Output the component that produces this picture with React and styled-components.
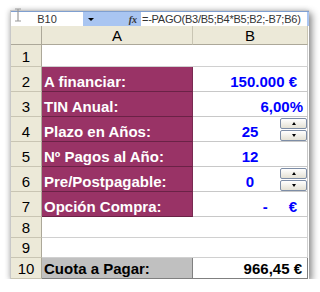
import React from "react";
import styled, { createGlobalStyle } from "styled-components";

const GlobalStyle = createGlobalStyle`
  body {
    margin: 0;
    background: #ffffff;
    font-family: "Liberation Sans", Arial, sans-serif;
  }
`;

const Window = styled.div`
  position: relative;
  margin: 10px 0 0 10px;
  width: 298px;
  border-top: 1px solid #c8c8c8;
  border-left: 1px solid #c8c8c8;
  background: #ffffff;
  box-shadow: 3px 3px 7px rgba(0, 0, 0, 0.45), -1px 0 5px rgba(0, 0, 0, 0.15);
`;

const FormulaBar = styled.div`
  display: flex;
  height: 14px;
  border-top: 1px solid #7f9fd0;
  background: #a9c5f1;
  font-size: 11px;
  color: #333;
`;

const NameBox = styled.div`
  width: 72px;
  background: #ffffff;
  text-align: center;
  line-height: 14px;
`;

const NameDrop = styled.div`
  width: 58px;
  display: flex;
  justify-content: space-between;
  align-items: center;
  padding: 0 4px 0 5px;
  box-sizing: border-box;
`;

const Arrow = styled.span`
  width: 0;
  height: 0;
  border-left: 3px solid transparent;
  border-right: 3px solid transparent;
  border-top: 3px solid #000;
`;

const Fx = styled.span`
  font-family: "Liberation Serif", serif;
  font-style: italic;
  font-weight: bold;
  font-size: 10px;
  color: #333;
`;

const Formula = styled.div`
  flex: 1;
  margin-right: 2px;
  background: #ffffff;
  padding-left: 1px;
  line-height: 14px;
  letter-spacing: -0.25px;
  white-space: nowrap;
`;

const Sheet = styled.div`
  display: grid;
  grid-template-columns: 31px 151px 115px;
  grid-template-rows: 19px 22px repeat(6, 25px) 21px 20px 21px;
  font-size: 15px;
`;

const Corner = styled.div`
  background: #ece9d8;
  border-right: 1px solid #aca899;
  border-bottom: 1px solid #aca899;
`;

const ColHead = styled.div`
  background: #ece9d8;
  border-right: 1px solid #c9c5b3;
  border-bottom: 1px solid #aca899;
  display: flex;
  justify-content: center;
  align-items: center;
  color: #000;
`;

const RowNum = styled.div`
  background: #ece9d8;
  border-right: 1px solid #aca899;
  border-bottom: 1px solid #c9c5b3;
  display: flex;
  justify-content: center;
  align-items: flex-end;
  padding-bottom: 1px;
  box-sizing: border-box;
`;

const Blank = styled.div`
  grid-column: span ${(p) => p.$span || 1};
  background: #ffffff;
  border-right: 1px solid #d0d0d0;
  border-bottom: 1px solid #d0d0d0;
`;

const Label = styled.div`
  background: ${(p) => (p.$grey ? "#c0c0c0" : "#993366")};
  color: ${(p) => (p.$grey ? "#000" : "#fff")};
  font-weight: bold;
  border-right: 1px solid ${(p) => (p.$grey ? "#808080" : "#7a2a52")};
  border-bottom: 1px solid ${(p) => (p.$grey ? "#808080" : "#6a2246")};
  display: flex;
  align-items: flex-end;
  padding: 0 0 1px 2px;
  box-sizing: border-box;
  white-space: nowrap;
`;

const Value = styled.div`
  position: relative;
  background: #ffffff;
  color: ${(p) => (p.$black ? "#000" : "#0000ff")};
  font-weight: bold;
  border-right: 1px solid ${(p) => (p.$black ? "#808080" : "#c8c8c8")};
  border-bottom: 1px solid ${(p) => (p.$black ? "#808080" : "#c8c8c8")};
  display: flex;
  align-items: flex-end;
  justify-content: ${(p) => p.$align || "flex-end"};
  gap: ${(p) => p.$gap || 0}px;
  padding: 0 ${(p) => p.$pr ?? 0}px 1px 0;
  box-sizing: border-box;
  white-space: nowrap;
`;

const Spinner = styled.div`
  position: absolute;
  right: 0;
  top: 1px;
  width: 27px;
  display: flex;
  flex-direction: column;
  gap: 1px;
`;

const SpinBtn = styled.div`
  height: 11px;
  border: 1px solid #7d8da6;
  border-radius: 2px;
  box-sizing: border-box;
  background: linear-gradient(#ffffff, #e4e1d4);
  display: flex;
  justify-content: center;
  align-items: center;

  &::after {
    content: "";
    width: 0;
    height: 0;
    border-left: 2.5px solid transparent;
    border-right: 2.5px solid transparent;
    ${(p) =>
      p.$up ? "border-bottom: 3px solid #000;" : "border-top: 3px solid #000;"}
  }
`;

const Cursor = styled.svg`
  position: absolute;
  left: 3px;
  top: -3px;
`;

const Spin = () => (
  <Spinner>
    <SpinBtn $up />
    <SpinBtn />
  </Spinner>
);

const rows = [
  { n: 2, label: "A financiar:", value: "150.000 €", pr: 10 },
  { n: 3, label: "TIN Anual:", value: "6,00%", pr: 4 },
  { n: 4, label: "Plazo en Años:", value: "25", center: true, spin: true },
  { n: 5, label: "Nº Pagos al Año:", value: "12", center: true },
  { n: 6, label: "Pre/Postpagable:", value: "0", center: true, spin: true },
];

export default function App() {
  return (
    <>
      <GlobalStyle />
      <Window>
        <Cursor width="8" height="14" viewBox="0 0 8 14">
          <path d="M1 1h6M4 1v12M1 13h6" stroke="#9a9a9a" strokeWidth="1.2" fill="none" />
        </Cursor>
        <FormulaBar>
          <NameBox>B10</NameBox>
          <NameDrop>
            <Arrow />
            <Fx>fx</Fx>
          </NameDrop>
          <Formula>=-PAGO(B3/B5;B4*B5;B2;-B7;B6)</Formula>
        </FormulaBar>
        <Sheet>
          <Corner />
          <ColHead>A</ColHead>
          <ColHead>B</ColHead>

          <RowNum>1</RowNum>
          <Blank $span={2} />

          {rows.map((r) => (
            <React.Fragment key={r.n}>
              <RowNum>{r.n}</RowNum>
              <Label>{r.label}</Label>
              <Value $align={r.center ? "center" : "flex-end"} $pr={r.pr}>
                {r.value}
                {r.spin && <Spin />}
              </Value>
            </React.Fragment>
          ))}

          <RowNum>7</RowNum>
          <Label>Opción Compra:</Label>
          <Value $gap={21} $pr={10}>
            <span>-</span>
            <span>€</span>
          </Value>

          <RowNum>8</RowNum>
          <Blank $span={2} />
          <RowNum>9</RowNum>
          <Blank $span={2} />

          <RowNum>10</RowNum>
          <Label $grey>Cuota a Pagar:</Label>
          <Value $black $pr={5}>
            966,45 €
          </Value>
        </Sheet>
      </Window>
    </>
  );
}
